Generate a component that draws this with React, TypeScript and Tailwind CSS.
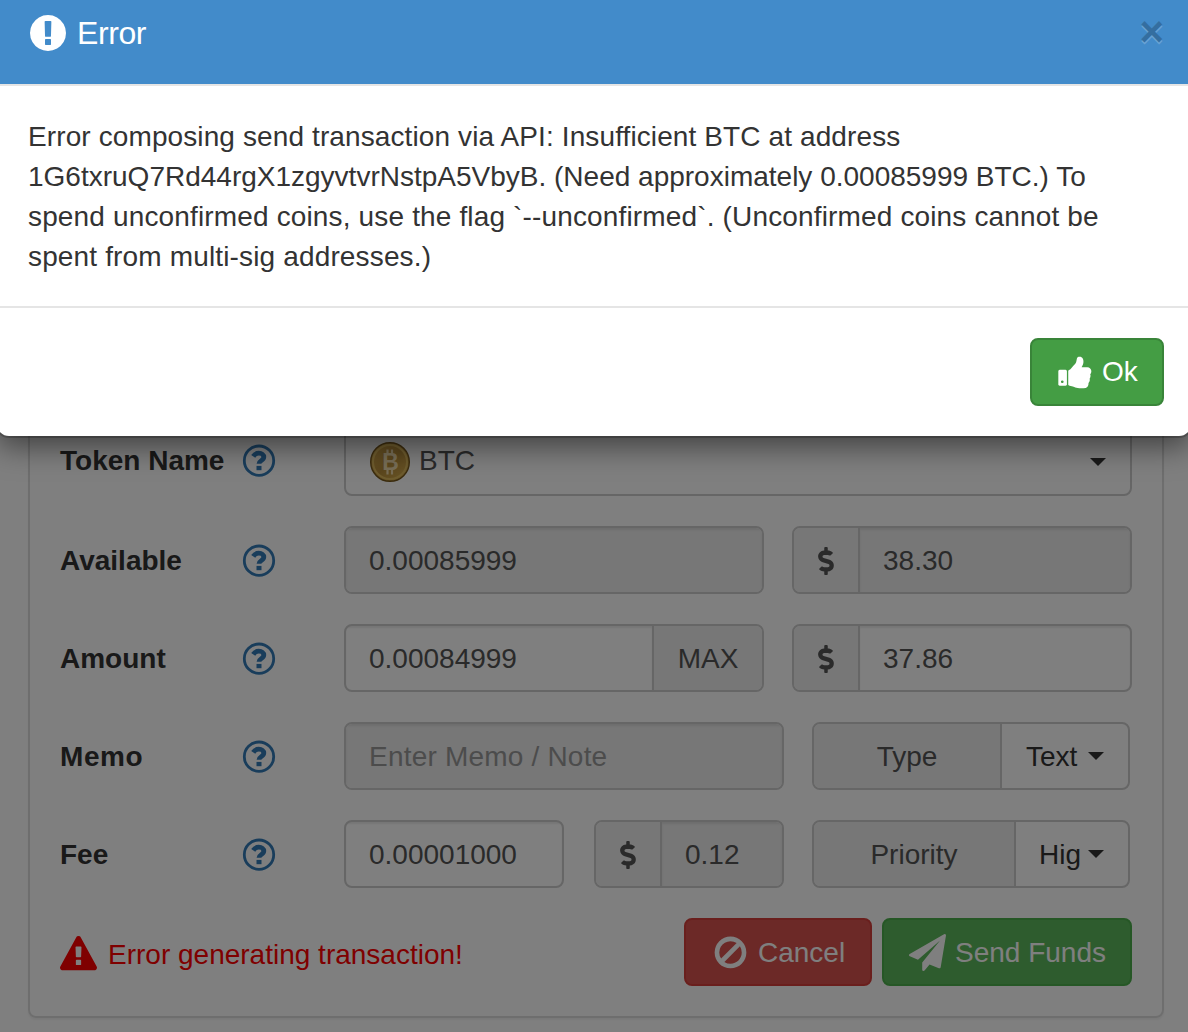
import { useState, type ReactNode } from "react";
import { FaDollarSign } from "react-icons/fa";

const icons = {
  error:
    "M896 128q209 0 385.5 103t279.5 279.5 103 385.5-103 385.5-279.5 279.5-385.5 103-385.5-103-279.5-279.5-103-385.5 103-385.5 279.5-279.5 385.5-103zm128 1247v-190q0-14-9-23.5t-22-9.5h-192q-13 0-23 10t-10 23v190q0 13 10 23t23 10h192q13 0 22-9.5t9-23.5zm-2-344l18-621q0-12-10-18-10-8-24-8h-220q-14 0-24 8-10 6-10 18l17 621q0 10 10 17.5t24 7.5h185q14 0 23.5-7.5t10.5-17.5z",
  warning:
    "M1024 1375v-190q0-14-9.5-23.5t-22.5-9.5h-192q-13 0-22.5 9.5t-9.5 23.5v190q0 14 9.5 23.5t22.5 9.5h192q13 0 22.5-9.5t9.5-23.5zm-2-374l18-459q0-12-10-19-13-11-24-11h-220q-11 0-24 11-10 7-10 21l17 457q0 10 10 16.5t24 6.5h185q14 0 23.5-6.5t10.5-16.5zm-14-934l768 1408q35 63-2 126-17 29-46.5 46t-63.5 17h-1536q-34 0-63.5-17t-46.5-46q-37-63-2-126l768-1408q17-31 47-49t65-18 65 18 47 49z",
  ban: "M1440 893q0-161-87-295l-754 753q137 89 297 89 111 0 211.5-43.5t173.5-116.5 116-174.5 43-212.5zm-999 299l755-754q-135-91-300-91-148 0-273 73t-198 199-73 274q0 162 89 299zm1223-299q0 157-61 300t-163.5 246-245 164-298.5 61-298.5-61-245-164-163.5-246-61-300 61-299.5 163.5-245.5 245-164 298.5-61 298.5 61 245 164 163.5 245.5 61 299.5z",
  plane:
    "M1764 11q33 24 27 64l-256 1536q-5 29-32 45-14 8-31 8-11 0-24-5l-453-185-242 295q-18 23-49 23-13 0-22-4-19-7-30.5-23.5t-11.5-36.5v-349l864-1059-1069 925-395-162q-37-14-40-55-2-40 32-59l1664-960q15-9 32-9 20 0 36 11z",
  thumbsUp:
    "M320 1344q0-26-19-45t-45-19q-27 0-45.5 19t-18.5 45q0 27 18.5 45.5t45.5 18.5q26 0 45-18.5t19-45.5zm160-512v640q0 26-19 45t-45 19h-288q-26 0-45-19t-19-45v-640q0-26 19-45t45-19h288q26 0 45 19t19 45zm1184 0q0 86-55 149 15 44 15 76 3 76-43 137 17 56 0 117-15 57-54 94 9 112-49 181-64 76-197 78h-129q-66 0-144-15.5t-121.5-29-120.5-39.5q-123-43-158-44-26-1-45-19.5t-19-44.5v-641q0-25 18-43.5t43-20.5q24-2 76-59t101-121q68-87 101-120 18-18 31-48t17.5-48.5 13.5-60.5q7-39 12.5-61t19.5-52 34-50q19-19 45-19 46 0 82.5 10.5t60 26 40 40.5 24 45 12 50 5 45 .5 39q0 38-9.5 76t-19 60-27.5 56q-3 6-10 18t-11 22-8 24h277q78 0 135 57t57 135z",
};

function Icon({ name, className }: { name: keyof typeof icons; className: string }) {
  return (
    <svg viewBox="0 0 1792 1792" fill="currentColor" className={`shrink-0 overflow-visible ${className}`}>
      <path d={icons[name]} />
    </svg>
  );
}

function HelpIcon() {
  return (
    <svg viewBox="0 0 34 34" className="h-[34px] w-[34px] text-[#337ab7]" fill="none" stroke="currentColor">
      <circle cx="17" cy="16.7" r="14.7" strokeWidth="2.8" />
      <path d="M11.2 12.4c1.4-2.2 3.2-3.2 5.6-3.2 3 0 5 1.7 5 3.8 0 3.7-4.8 3.5-4.8 6.7" strokeWidth="4.8" />
      <path d="M14.5 21.9h5v4.3h-5z" fill="currentColor" stroke="none" />
    </svg>
  );
}

function BtcIcon() {
  return (
    <svg viewBox="0 0 40 40" className="h-10 w-10">
      <defs>
        <linearGradient id="coin" x1="0" y1="0" x2="1" y2="1">
          <stop offset="0" stopColor="#cfa54a" />
          <stop offset="0.5" stopColor="#b78c3a" />
          <stop offset="1" stopColor="#d8b050" />
        </linearGradient>
      </defs>
      <circle cx="20" cy="20" r="19.3" fill="url(#coin)" stroke="#76581c" strokeWidth="1.4" />
      <circle cx="20" cy="20" r="17" fill="none" stroke="#dcb85c" strokeWidth="2" />
      <g stroke="#f0dcae" strokeWidth="2.2">
        <path d="M17.5 7.5v5M22 7.5v5M17.5 27.5v5M22 27.5v5" />
      </g>
      <text
        x="20.5"
        y="28"
        textAnchor="middle"
        fontSize="23"
        fontWeight="bold"
        fontFamily="Liberation Sans, sans-serif"
        fill="#f0dcae"
      >
        B
      </text>
    </svg>
  );
}

function Caret() {
  return <span className="h-0 w-0 border-x-8 border-t-8 border-x-transparent border-t-[#333]" />;
}

function Row({ label, className = "pt-px", children }: { label: string; className?: string; children: ReactNode }) {
  return (
    <div className="flex h-[68px] items-center">
      <label className={`w-[182px] shrink-0 font-bold ${className}`}>{label}</label>
      <div className={`w-[102px] shrink-0 ${className}`}>
        <HelpIcon />
      </div>
      {children}
    </div>
  );
}

const box = "flex h-[68px] shrink-0 overflow-hidden rounded-lg border-2 border-[#ccc] text-[#555]";
const field = "flex flex-1 items-center pt-px pl-[23px] shadow-[inset_0_2px_2px_rgba(0,0,0,0.075)]";
const addon = "flex shrink-0 items-center justify-center bg-[#eee] pt-px";

function Dollar() {
  return (
    <div className={`${addon} w-[66px] border-r-2 border-[#ccc]`}>
      <FaDollarSign className="h-7 w-[18px]" />
    </div>
  );
}

export default function App() {
  const [open, setOpen] = useState(true);

  return (
    <div className="relative h-[1032px] w-[1188px] overflow-hidden bg-white font-['Liberation_Sans',Arial,sans-serif] text-[28px] leading-10 text-[#333]">
      {/* Send form */}
      <div className="pt-[366px] pr-6 pl-7">
        <div className="flex flex-col gap-[30px] rounded-lg border-2 border-[#ddd] px-[30px] pt-[60px] pb-[30px] shadow-[0_2px_2px_rgba(0,0,0,0.05)]">
          <Row label="Token Name" className="pb-[3px]">
            <div className={`${box} w-[788px] items-center pr-6 pl-6 text-[#333]`}>
              <BtcIcon />
              <span className="ml-[9px] flex-1 pb-0.5">BTC</span>
              <Caret />
            </div>
          </Row>

          <Row label="Available">
            <div className={`${box} w-[420px]`}>
              <div className={`${field} bg-[#eee]`}>0.00085999</div>
            </div>
            <div className={`${box} ml-7 w-[340px]`}>
              <Dollar />
              <div className={`${field} bg-[#eee]`}>38.30</div>
            </div>
          </Row>

          <Row label="Amount">
            <div className={`${box} w-[420px]`}>
              <div className={field}>0.00084999</div>
              <div className={`${addon} w-[110px] border-l-2 border-[#ccc]`}>MAX</div>
            </div>
            <div className={`${box} ml-7 w-[340px]`}>
              <Dollar />
              <div className={field}>37.86</div>
            </div>
          </Row>

          <Row label="Memo" className="pt-px tracking-[0.6px]">
            <div className={`${box} w-[440px]`}>
              <div className={`${field} bg-[#eee] tracking-[0.2px] text-[#999]`}>Enter Memo / Note</div>
            </div>
            <div className={`${box} ml-7 w-[318px]`}>
              <div className={`${addon} w-[188px] border-r-2 border-[#ccc]`}>Type</div>
              <div className="flex flex-1 items-center justify-between pr-6 pl-6 text-[#333]">
                <span className="pt-px">Text</span>
                <Caret />
              </div>
            </div>
          </Row>

          <Row label="Fee">
            <div className={`${box} w-[220px]`}>
              <div className={field}>0.00001000</div>
            </div>
            <div className={`${box} ml-[30px] w-[190px]`}>
              <Dollar />
              <div className={`${field} bg-[#eee]`}>0.12</div>
            </div>
            <div className={`${box} ml-7 w-[318px]`}>
              <div className={`${addon} w-[202px] border-r-2 border-[#ccc]`}>Priority</div>
              <div className="flex flex-1 items-center justify-between pr-6 pl-[23px] text-[#333]">
                <span className="pt-px">Hig</span>
                <Caret />
              </div>
            </div>
          </Row>

          <div className="flex h-[68px] items-center">
            <div className="flex flex-1 items-center gap-[11px] pt-1 text-[#f00]">
              <Icon name="warning" className="h-[37px] w-[37px]" />
              <span className="pt-px">Error generating transaction!</span>
            </div>
            <button className="flex h-[68px] w-[188px] items-center gap-[9px] rounded-lg border-2 border-[#d43f3a] bg-[#d9534f] pl-[26px] text-white">
              <Icon name="ban" className="h-[37px] w-[37px]" />
              <span className="pt-px">Cancel</span>
            </button>
            <button className="ml-2.5 flex h-[68px] w-[250px] items-center gap-[9px] rounded-lg border-2 border-[#4cae4c] bg-[#5cb85c] pl-[25px] text-white">
              <Icon name="plane" className="h-[37px] w-[37px]" />
              <span className="pt-px">Send Funds</span>
            </button>
          </div>
        </div>
      </div>

      {open && (
        <>
          <div className="absolute inset-0 bg-black/50" />

          {/* Error dialog */}
          <div className="absolute top-0 -right-[3px] -left-[3px] rounded-b-xl bg-white px-[3px] shadow-[0_10px_30px_rgba(0,0,0,0.5),0_0_0_2px_rgba(0,0,0,0.2)]">
            <div className="-mx-[3px] flex h-[86px] items-start justify-between border-b-2 border-[#e5e5e5] bg-[#428bca] pr-[27px] pl-[30px] text-white">
              <div className="flex h-[66px] items-center text-[32px]">
                <Icon name="error" className="h-[42px] w-[42px]" />
                <h4 className="ml-2 pb-px tracking-[-0.4px]">Error</h4>
              </div>
              <button
                onClick={() => setOpen(false)}
                className="mt-3 text-[42px] font-bold text-black opacity-20 [text-shadow:0_2px_0_#fff]"
              >
                ×
              </button>
            </div>
            <div className="px-7 pt-[31px] pb-[29px]">
              <p className="whitespace-nowrap">
                <span className="tracking-[0.11px]">
                  Error composing send transaction via API: Insufficient BTC at address
                </span>
                <br />
                1G6txruQ7Rd44rgX1zgyvtvrNstpA5VbyB. (Need approximately 0.00085999 BTC.) To
                <br />
                <span className="tracking-[0.15px]">
                  spend unconfirmed coins, use the flag `--unconfirmed`. (Unconfirmed coins cannot be
                </span>
                <br />
                <span className="tracking-[0.15px]">spent from multi-sig addresses.)</span>
              </p>
            </div>
            <div className="-mx-[3px] flex justify-end border-t-2 border-[#e5e5e5] py-[30px] pr-[27px]">
              <button
                onClick={() => setOpen(false)}
                className="flex h-[68px] w-[134px] items-center gap-[8px] rounded-lg border-2 border-[#398439] bg-[#449d44] pl-[25px] text-white"
              >
                <Icon name="thumbsUp" className="h-[37px] w-[37px]" />
                <span>Ok</span>
              </button>
            </div>
          </div>
        </>
      )}
    </div>
  );
}
